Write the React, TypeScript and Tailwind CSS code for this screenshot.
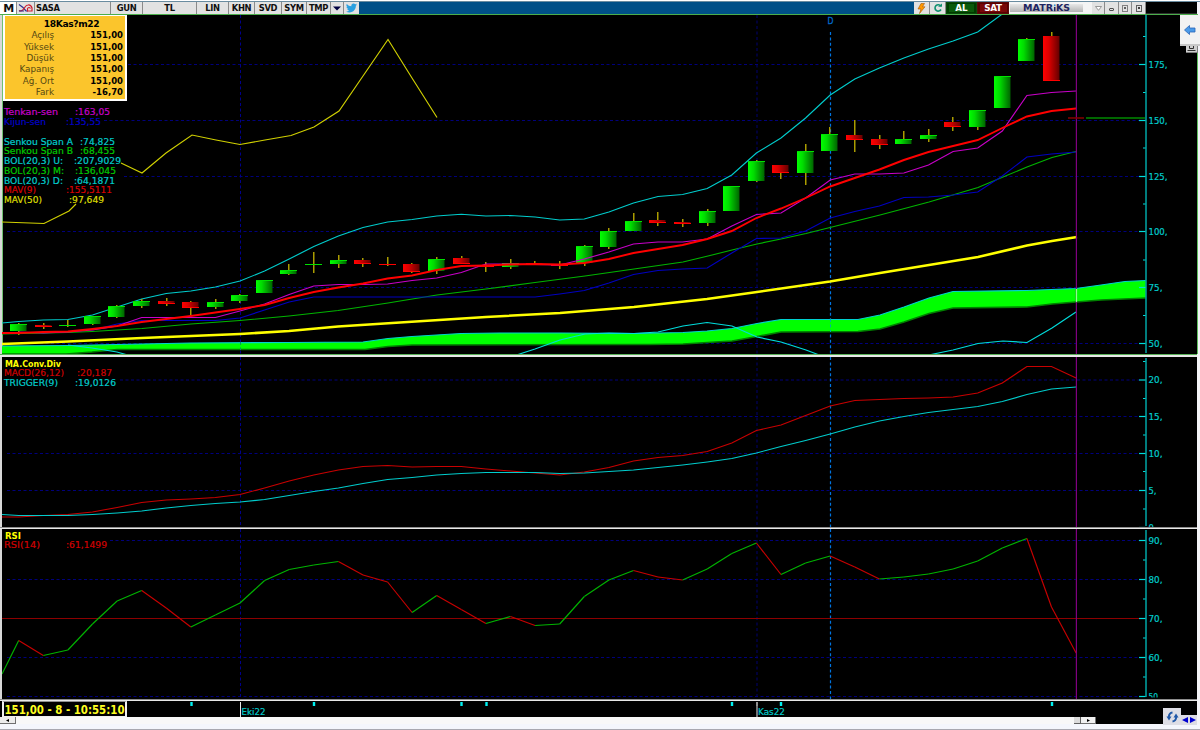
import React, { FC, ReactNode } from "react";

type Pt = [number, number];

const CYAN = "#00cccc";
const STEP = 24.59;
const barX = (i: number) => 18.7 + STEP * i;

// one y per bar, starting with bar `from`
const series = (from: number, ys: number[]): Pt[] =>
  ys.map((y, i) => [barX(from + i), y]);

const toPoints = (pts: Pt[]) =>
  pts.map(([x, y]) => `${x.toFixed(1)},${y}`).join(" ");

// high, top, bottom, low, up
const candles: [number, number, number, number, boolean][] = [
  [323, 324, 331, 335, true], [323, 325, 327, 329, false], [320, 325, 326, 327, true],
  [316, 316, 324, 325, true], [305, 306, 317, 318, true], [299, 301, 306, 308, true],
  [298, 301, 304, 306, false], [301, 302, 308, 315, false], [299, 302, 307, 309, true],
  [294, 295, 301, 303, true], [280, 280, 293, 293, true], [264, 270, 274, 275, true],
  [252, 264, 265, 273, true], [255, 260, 264, 268, true], [258, 260, 264, 267, false],
  [257, 264, 265, 266, false], [263, 264, 272, 273, false], [257, 259, 271, 274, true],
  [256, 258, 264, 264, false], [262, 265, 267, 272, false], [259, 263, 267, 269, true],
  [261, 263, 265, 265, false], [261, 264, 266, 269, false], [245, 246, 263, 266, true],
  [228, 231, 247, 249, true], [213, 221, 231, 231, true], [212, 220, 223, 226, false],
  [219, 222, 224, 227, false], [209, 211, 223, 226, true], [186, 186, 211, 211, true],
  [160, 161, 181, 182, true], [165, 165, 173, 179, false], [144, 151, 173, 185, true],
  [127, 134, 151, 151, true], [120, 135, 140, 152, false], [135, 139, 145, 149, false],
  [131, 139, 144, 144, true], [129, 135, 139, 142, true], [117, 122, 127, 131, false],
  [110, 110, 127, 130, true], [76, 76, 108, 108, true], [38, 39, 61, 61, true],
  [32, 36, 81, 81, false],
];

const bolUp: Pt[] = [[2, 323], ...series(0, [
  321.5, 320, 319.5, 315, 307, 299, 293.5, 291, 287, 281, 271, 259, 246.5, 236, 227.5, 222,
  219.5, 216, 214.3, 216, 215.5, 217, 220, 219, 212, 203, 196.5, 194.5, 188.5, 175, 153, 138,
  118, 95, 79, 68, 58, 49, 41, 32, 14,
])];

const tenkan = series(0, [
  332, 333, 332, 330, 326, 317.5, 317.5, 317.5, 317.5, 311, 304, 294.5, 286, 284.5, 284.5, 284,
  280.5, 278, 272.5, 264, 264, 264.5, 265, 259, 252, 244, 242, 242, 239, 226, 214.5, 213,
  198, 180, 174, 174, 173, 165, 151.5, 148, 131, 95.5, 92.5, 91,
]);

const kijun = series(3, [
  330, 324, 320.5, 320.5, 320.5, 320.5, 318, 310, 302, 297, 297, 297, 297, 297, 297, 297, 297,
  297, 297, 294, 290.5, 283, 274.5, 270.5, 269, 268, 253, 238.5, 238, 231, 218, 211.5, 206,
  197.5, 197, 195, 192, 176, 157, 154, 152,
]);

const mav9: Pt[] = [[2, 333], ...series(0, [
  333, 332, 331.5, 329, 326, 322, 319, 316, 312.5, 309, 305, 298, 292, 287.5, 283.5, 278.5,
  275.5, 270, 266, 265.5, 264.5, 264, 264.5, 263, 259, 253, 249, 245, 239, 231, 218, 208.5,
  198, 186.5, 178, 169.5, 160, 152, 146, 140, 128, 116.5, 111, 108.5,
])];

const bolMid: Pt[] = [
  [2, 334], [68, 332.5], [92, 331.5], [142, 328.5], [191, 324], [240, 320.5], [289, 316],
  [338, 310.5], [388, 303], [400, 301], [437, 295], [486, 289], [535, 282.5], [585, 276],
  [634, 269], [683, 262], [708, 256], [732, 250], [757, 244], [781, 239], [806, 233.5],
  [830, 227.5], [880, 215], [929, 202], [978, 187.5], [1003, 177], [1027, 167],
  [1052, 157.5], [1076, 151.5],
];

const mav50: Pt[] = [
  [2, 344], [68, 341.5], [142, 338], [191, 336], [240, 334], [289, 331], [338, 326.5],
  [400, 322.5], [486, 317], [560, 313], [634, 307], [707, 299], [757, 292], [830, 281.5],
  [880, 273], [929, 265], [978, 257], [1027, 245.5], [1052, 241], [1077, 237],
];

const spanA: Pt[] = [
  [2, 346], [68, 345.5], [92, 345], [142, 344], [191, 343], [289, 342.5], [363, 342],
  [388, 338.5], [412, 336.5], [461, 333.5], [500, 333], [560, 333], [634, 333.5], [683, 332.5],
  [707, 331], [732, 328.5], [757, 323.5], [781, 319.5], [858, 319.5], [880, 315], [904, 307],
  [929, 298], [953, 291.5], [1027, 290.5], [1076, 288.5], [1101, 285], [1125, 281.5], [1146, 280.5],
];

const spanB: Pt[] = [
  [2, 354], [66, 354], [92, 352], [117, 349.5], [365, 349.5], [388, 346.5], [412, 345],
  [650, 344.5], [683, 344], [732, 341], [757, 336.5], [781, 332], [858, 331.5], [880, 329],
  [904, 322], [929, 313.5], [953, 308], [1027, 307], [1052, 304], [1076, 302], [1101, 300],
  [1146, 298],
];

const bolDown: Pt[][] = [
  [[68, 345], [92, 348], [117, 352], [126, 354.5]],
  [
    [518, 354.5], [535, 349], [560, 340], [585, 334], [609, 333], [634, 333.5], [658, 332],
    [683, 326], [707, 322.5], [732, 326], [757, 337], [781, 342], [806, 350], [818, 354.5],
  ],
  [[931, 354.5], [953, 350], [978, 343.5], [1003, 341], [1027, 342.5], [1052, 328], [1076, 312]],
];

const chikou: Pt[][] = [
  [[2, 222], [44, 223.5], [69, 211], [76, 204]],
  [
    [121, 163], [142, 173], [166, 153], [192, 135], [216, 140], [240, 144.5], [265, 140],
    [291, 135.5], [314, 127], [339, 111], [363, 76], [388, 39.5], [412, 78], [437, 117.5],
  ],
];

const macd: Pt[] = [[2, 517], ...series(0, [
  517, 515.5, 514.5, 512, 507.5, 502.5, 500, 499, 497.5, 494.5, 488, 481, 475, 470, 466.5,
  465.5, 467, 466.5, 466.5, 469, 471, 473, 475, 472, 467.5, 461, 457.5, 455.5, 451.5, 443,
  430.5, 425, 415.5, 406, 400.5, 399.5, 398.5, 398, 397, 393, 383, 366.5, 366.5, 378,
])];

const trigger: Pt[] = [[2, 514.5], ...series(0, [
  515.5, 515.5, 515.5, 514.5, 513, 511, 508, 505.5, 503.5, 502, 499.5, 495.5, 491.5, 488,
  483.5, 479.5, 477.5, 475, 473.5, 472.5, 472.5, 472.5, 473.5, 473, 471.5, 470, 467.5, 465,
  462, 458.5, 453, 446.5, 440.5, 434, 427, 421, 416.5, 412.5, 409.5, 406.5, 401.5, 394.5,
  389, 387,
])];

const rsi: Pt[] = [[2, 674], ...series(0, [
  640.5, 655.5, 650, 624, 601, 590.5, 608, 627, 615, 603, 580.5, 569.5, 565, 561.5, 575, 582,
  612.5, 595.5, 609.5, 623.5, 616.5, 625.5, 624, 596.5, 580, 570.5, 577, 580, 569, 553.5, 543,
  574.5, 563, 556, 567, 579, 577, 574, 569, 561, 548, 538.5, 607, 653,
])];

const Line: FC<{ pts: Pt[]; color: string; width?: number }> = ({ pts, color, width = 1.15 }) => (
  <polyline points={toPoints(pts)} fill="none" stroke={color} strokeWidth={width} />
);

const Label: FC<{
  x: number; y: number; w: number; fill: string; bold?: boolean; size?: number; children: ReactNode;
}> = ({ x, y, w, fill, bold, size = 8.4, children }) => (
  <text
    x={x} y={y} fill={fill} fontSize={size} fontWeight={bold ? 700 : 400}
    textLength={w} lengthAdjust="spacingAndGlyphs"
  >
    {children}
  </text>
);

// name, name width, value, value start, value width, colour, baseline
const Legend: FC<{ rows: [string, number, string, number, number, string, number][] }> = ({ rows }) => (
  <>
    {rows.map(([name, w, value, vx, vw, color, y]) => (
      <g key={name} stroke={color} strokeWidth={0.2}>
        <Label x={4} y={y} w={w} fill={color}>{name}</Label>
        <Label x={vx} y={y} w={vw} fill={color}>{value}</Label>
      </g>
    ))}
  </>
);

const HGrid: FC<{ ys: number[]; from?: number }> = ({ ys, from = 7 }) => (
  <>
    {ys.map((y) => (
      <line key={y} x1={from} x2={1139} y1={y} y2={y} stroke="#00007c" strokeDasharray="3 2.5" />
    ))}
  </>
);

const VGrid: FC<{ top: number; bottom: number; markerTop?: number }> = ({ top, bottom, markerTop }) => (
  <>
    <line x1={240.5} x2={240.5} y1={top} y2={bottom} stroke="#00008c" strokeDasharray="3 2.5" />
    <line x1={757} x2={757} y1={top} y2={bottom} stroke="#000070" strokeDasharray="3 2.5" />
    <line
      x1={830.5} x2={830.5} y1={markerTop ?? top} y2={bottom}
      stroke="#0074e0" strokeWidth={1.2} strokeDasharray="3 2.4"
    />
  </>
);

const Axis: FC<{
  top: number; bottom: number; major: [number, string, number][]; minor: number[];
}> = ({ top, bottom, major, minor }) => (
  <>
    <rect x={1145.2} y={top} width={1.6} height={bottom - top} fill="#009c9c" />
    {major.map(([y, text, w]) => (
      <g key={text}>
        <line x1={1139} x2={1145.5} y1={y} y2={y} stroke="#00dcdc" strokeWidth={1.2} />
        <g stroke={CYAN} strokeWidth={0.2}>
          <Label x={1148.5} y={y + 3.2} w={w} fill={CYAN}>{text}</Label>
        </g>
      </g>
    ))}
    {minor.map((y) => (
      <line key={y} x1={1143} x2={1145.5} y1={y} y2={y} stroke="#00dcdc" />
    ))}
  </>
);

const Cursor: FC<{ top: number; bottom: number }> = ({ top, bottom }) => (
  <line x1={1076.4} x2={1076.4} y1={top} y2={bottom} stroke="#800080" strokeWidth={1.2} />
);

const PricePanel = () => (
  <svg className="block h-[339px] w-[1195px]" viewBox="2 15 1195 339">
    <defs>
      <linearGradient id="up">
        <stop offset="0" stopColor="#00ff00" />
        <stop offset="0.35" stopColor="#00dc00" />
        <stop offset="1" stopColor="#006400" />
      </linearGradient>
      <linearGradient id="down">
        <stop offset="0" stopColor="#ff0000" />
        <stop offset="0.35" stopColor="#dc0000" />
        <stop offset="1" stopColor="#640000" />
      </linearGradient>
    </defs>
    <HGrid ys={[64.5]} from={128} />
    <HGrid ys={[120.5]} from={104} />
    <HGrid ys={[176.5]} from={124} />
    <HGrid ys={[231.5, 287.5, 343.5]} />
    <VGrid top={15} bottom={354} markerTop={32} />
    <g stroke="#0068c8" strokeWidth={0.3}>
      <Label x={827.5} y={24.3} w={6} fill="#0068c8" size={8}>D</Label>
    </g>

    <polygon points={toPoints([...spanA, ...[...spanB].reverse()])} fill="#00ff00" />
    <Line pts={spanB} color="#008000" width={1.6} />
    <Line pts={spanA} color="#00d0d0" />
    {bolDown.map((pts, i) => <Line key={i} pts={pts} color="#00dcdc" />)}
    <line x1={240.5} x2={240.5} y1={342} y2={350} stroke="#00a050" strokeDasharray="3 2.5" />
    <line x1={830.5} x2={830.5} y1={319} y2={332} stroke="#00b0a0" strokeDasharray="3 2.4" />

    {chikou.map((pts, i) => <Line key={i} pts={pts} color="#d0d000" />)}
    <Line pts={bolUp} color={CYAN} />
    {candles.map(([high, top, bottom, low, up], i) => {
      const x = Math.round(barX(i) - 8.7);
      const edge = up ? "#00e000" : "#ff0000";
      return (
        <g key={i}>
          <rect x={x + 8} y={high} width={1.5} height={low - high} fill="#aa9c00" />
          <rect x={x} y={top} width={16.5} height={bottom - top} fill={up ? "url(#up)" : "url(#down)"} />
          <rect x={x} y={up ? top : bottom - 1} width={17} height={1} fill={edge} />
        </g>
      );
    })}
    <Line pts={bolMid} color="#00b400" />
    <Line pts={kijun} color="#0000c0" />
    <Line pts={tenkan} color="#c800c8" />
    <Line pts={mav9} color="#ff0000" width={1.9} />
    <Line pts={mav50} color="#ffff00" width={2.6} />

    <Cursor top={15} bottom={354} />
    <line x1={1076.5} x2={1076.5} y1={289} y2={302} stroke="#90ff90" strokeWidth={1.2} />
    <line x1={1068} x2={1084} y1={118} y2={118} stroke="#800000" strokeWidth={1.6} />
    <line x1={1086} x2={1145} y1={118} y2={118} stroke="#008a00" strokeWidth={1.6} />
    <Axis
      top={15} bottom={353}
      major={[[64.5, "175,", 19], [120.5, "150,", 19], [176.5, "125,", 19], [231.5, "100,", 19], [287.5, "75,", 14], [343.5, "50,", 14]]}
      minor={[36.5, 92.5, 148, 204, 260, 315.5]}
    />
    <Legend
      rows={[
        ["Tenkan-sen", 54, ":163,05", 75, 35, "#c800c8", 115.3],
        ["Kijun-sen", 42, ":135,55", 66, 35, "#0000c8", 125.2],
        ["Senkou Span A", 69, ":74,825", 80, 35, CYAN, 144.6],
        ["Senkou Span B", 69, ":68,455", 80, 35, "#00c800", 154.4],
        ["BOL(20,3) U:", 59, ":207,9029", 74, 47, CYAN, 164],
        ["BOL(20,3) M:", 60, ":136,045", 75, 41, "#00c800", 173.8],
        ["BOL(20,3) D:", 59, ":64,1871", 74, 41, CYAN, 183.5],
        ["MAV(9)", 32, ":155,5111", 66, 46, "#d80000", 193.2],
        ["MAV(50)", 38, ":97,649", 69, 35, "#dcdc00", 203],
      ]}
    />
  </svg>
);

const MacdPanel = () => (
  <svg className="block h-[170px] w-[1195px]" viewBox="2 357 1195 170">
    <HGrid ys={[380]} from={120} />
    <HGrid ys={[416.5, 453.5, 490.5]} />
    <VGrid top={357} bottom={527} />
    <Line pts={macd} color="#c80000" />
    <Line pts={trigger} color={CYAN} />
    <Cursor top={357} bottom={527} />
    <Axis
      top={358} bottom={526}
      major={[[380, "20,", 14], [416.5, "15,", 14], [453.5, "10,", 14], [490.5, "5,", 8], [527.5, "0,", 8]]}
      minor={[361.5, 398.5, 435, 471.5, 509]}
    />
    <Label x={5} y={367} w={56} fill="#ffff00" bold>MA.Conv.Div</Label>
    <Legend
      rows={[
        ["MACD(26,12)", 60, ":20,187", 77, 35, "#d00000", 376],
        ["TRIGGER(9)", 54, ":19,0126", 75, 41, CYAN, 385.7],
      ]}
    />
  </svg>
);

const RsiPanel = () => (
  <svg className="block h-[170px] w-[1195px]" viewBox="2 529 1195 170">
    <HGrid ys={[540.5]} from={110} />
    <HGrid ys={[579.5, 657.5, 696.5]} />
    <VGrid top={529} bottom={699} />
    <line x1={2} x2={1145} y1={618.5} y2={618.5} stroke="#8c0000" />
    {rsi.slice(1).map(([x, y], i) => (
      <Line key={i} pts={[rsi[i], [x, y]]} color={y < rsi[i][1] ? "#00b400" : "#c80000"} />
    ))}
    <Cursor top={529} bottom={699} />
    <Axis
      top={530} bottom={697}
      major={[[540.5, "90,", 14], [579.5, "80,", 14], [618.5, "70,", 14], [657.5, "60,", 14], [696.5, "50,", 12]]}
      minor={[560, 599, 638, 677]}
    />
    <rect x={1147} y={697.5} width={30} height={2} fill="#000" />
    <Label x={5} y={538.5} w={16} fill="#ffff00" bold>RSI</Label>
    <Legend rows={[["RSI(14)", 36, ":61,1499", 66, 41, "#d00000", 547.7]]} />
  </svg>
);

const quote = [
  ["Açılış", "151,00"],
  ["Yüksek", "151,00"],
  ["Düşük", "151,00"],
  ["Kapanış", "151,00"],
  ["Ağ. Ort", "151,00"],
  ["Fark", "-16,70"],
];

const QuoteBox = () => (
  <div className="absolute left-0 top-0 h-[86px] w-[124px] border-2 border-t-[1px] border-white bg-[#fbc52c] pt-[3px] text-black">
    <div className="pl-[13px] text-center text-[9.1px] font-bold leading-[11px] tracking-[-0.35px]">18Kas?m22</div>
    {quote.map(([name, value]) => (
      <div key={name} className="flex h-[11.35px] items-center pr-[2px]">
        <span className="w-[49px] text-right text-[8.8px] leading-none text-[#554812]">{name}</span>
        <span className="flex-1 text-right text-[8.5px] font-bold leading-none">{value}</span>
      </div>
    ))}
  </div>
);

const Cell: FC<{ className: string; children?: ReactNode }> = ({ className, children }) => (
  <div
    className={`flex h-full shrink-0 items-center justify-center border-r border-[#8a8a8a] bg-[#e2e2e2] text-[8.4px] font-bold leading-none tracking-[-0.35px] text-[#101010] ${className}`}
  >
    {children}
  </div>
);

const Header = () => (
  <div className="flex h-[12px] w-[1197px] bg-[#005088]">
    <Cell className="w-[17px] bg-white pl-[1px] text-[11px] text-[#14146e]">M</Cell>
    <Cell className="w-[18px]">
      <svg className="h-[10px] w-[15px]" viewBox="0 0 15 10" fill="none">
        <path d="M1 1.500 L5 4.500 L8 8 H10" stroke="#303090" strokeWidth="1.2" />
        <path d="M1 7.500 Q4 9 6 5.500 T10 2 Q13 1.500 14 5 V8 H9.500 V5.500 Q11 3.500 12.500 5.500" stroke="#d02030" strokeWidth="1.200" />
        <path d="M1 8 H6" stroke="#303090" strokeWidth="1" />
      </svg>
    </Cell>
    <Cell className="w-[76px] justify-start pl-[1px]">SASA</Cell>
    <Cell className="w-[32px]">GUN</Cell>
    <Cell className="w-[54px]">TL</Cell>
    <Cell className="w-[32px]">LIN</Cell>
    <Cell className="w-[26px]">KHN</Cell>
    <Cell className="w-[27px]">SVD</Cell>
    <Cell className="w-[25px]">SYM</Cell>
    <Cell className="w-[24px]">TMP</Cell>
    <Cell className="w-[13px]">
      <svg className="h-[5px] w-[8px]" viewBox="0 0 8 5"><path d="M0 0.500H8L4 4.500Z" fill="#000040" /></svg>
    </Cell>
    <Cell className="w-[15px] border-r-0">
      <svg className="h-[10px] w-[11px]" viewBox="0 0 24 20" fill="#2aa0e0">
        <path d="M24 2.400a10 10 0 0 1-2.800.8A5 5 0 0 0 23.300.5a10 10 0 0 1-3.100 1.200A4.900 4.900 0 0 0 11.800 6.200 14 14 0 0 1 1.700 1a4.900 4.900 0 0 0 1.500 6.600A5 5 0 0 1 1 7a4.900 4.900 0 0 0 4 4.900 5 5 0 0 1-2.300.1 4.900 4.900 0 0 0 4.600 3.400A10 10 0 0 1 0 17.500a14 14 0 0 0 7.500 2.200c9.100 0 14-7.500 14-14v-.6A10 10 0 0 0 24 2.400z" />
      </svg>
    </Cell>
    <div className="flex-1" />
    <Cell className="w-[16px]">
      <svg className="h-[11px] w-[9px]" viewBox="0 0 9 11">
        <path d="M4 0.500H7.500L5.500 3.800H8L2.500 10.500L4 6H1Z" fill="#ff9800" stroke="#a85800" strokeWidth="0.600" />
      </svg>
    </Cell>
    <Cell className="w-[16px]">
      <svg className="h-[10px] w-[10px]" viewBox="0 0 10 10">
        <path d="M7.800 3A3.200 3.200 0 1 0 8 6.500" fill="none" stroke="#109070" strokeWidth="1.600" />
        <path d="M5 3.800H9V0.500Z" fill="#109070" />
      </svg>
    </Cell>
    <div className="flex w-[31px] items-center justify-center border border-[#0a4a0a] bg-[#003c00] text-[8.8px] font-bold leading-none text-white">
      <span className="w-[25px] bg-[#0a5a0a] text-center leading-[8px]">AL</span>
    </div>
    <div className="flex w-[32px] items-center justify-center border border-[#5a0a0a] bg-[#5a0000] text-[8.8px] font-bold leading-none text-white">
      <span className="w-[27px] bg-[#780808] text-center leading-[8px] tracking-[-0.4px]">SAT</span>
    </div>
    <div className="flex w-[83px] items-center bg-[#f4f4f4]">
      <div className="ml-px flex h-[8px] w-[73px] items-center justify-center bg-linear-to-b from-[#e8e8e8] to-[#b4b4b4]">
        <svg className="h-[10px] w-[48px] overflow-visible" viewBox="0 0 48 10">
          <Label x={0} y={8.2} w={30} fill="#1e2460" bold size={9}>MATR</Label>
          <rect x={31} y={1.5} width={1.5} height={1.6} fill="#2a90d0" />
          <rect x={31} y={4} width={1.5} height={4.2} fill="#1e2460" />
          <Label x={33} y={8.2} w={14} fill="#1e2460" bold size={9}>KS</Label>
        </svg>
      </div>
    </div>
    <Cell className="w-[13px]">
      <svg className="h-[5px] w-[7px]" viewBox="0 0 7 5"><path d="M0.500 0.500H6.500L3.500 4.300Z" fill="#fff" stroke="#808080" strokeWidth="0.800" /></svg>
    </Cell>
    <Cell className="w-[14px]"><i className="mt-[3px] h-[3px] w-[5px] rounded-[1px] border border-[#505050]" /></Cell>
    <Cell className="w-[13px]">
      <i className="flex h-[7px] w-[6px] items-center justify-center border border-[#808080]"><b className="size-[2px] bg-[#606060]" /></i>
    </Cell>
    <Cell className="w-[14px]">
      <i className="flex h-[7px] w-[6px] items-center justify-center border border-[#606060]"><b className="size-[2px] bg-[#404040]" /></i>
    </Cell>
    <div className="w-[51px] border-b border-[#303030] bg-black" />
  </div>
);

const ticks = [191.5, 314, 461.5, 486.5, 732, 781, 1052];

const TimeAxis = () => (
  <div className="relative flex h-[16px] w-[1197px] bg-black">
    <div className="ml-[2px] flex h-[16px] w-[125px] items-center border-2 border-y border-[#f0f0f0] border-t-[#909090] bg-black">
      <svg className="h-[14px] w-[121px] overflow-visible" viewBox="0 0 121 14">
        <Label x={0.5} y={11.8} w={120} fill="#ffff20" bold size={11.6}>151,00 - 8 - 10:55:10</Label>
      </svg>
    </div>
    <svg className="h-[16px] w-[1070px]" viewBox="127 701 1070 16">
      {ticks.map((x) => <rect key={x} x={x - 1.2} y={702} width={2.4} height={4} fill="#00f0f0" />)}
      <rect x={240} y={702} width={1} height={15} fill="#e8e8e8" />
      <rect x={756} y={702} width={2} height={4} fill="#909090" />
      <rect x={756.5} y={706} width={1} height={11} fill="#e8e8e8" />
      <g stroke={CYAN} strokeWidth={0.2}>
        <Label x={241.5} y={714.6} w={24} fill={CYAN} size={8.6}>Eki22</Label>
        <Label x={758} y={714.6} w={27} fill={CYAN} size={8.6}>Kas22</Label>
      </g>
    </svg>
  </div>
);

const Scrollbar = () => (
  <div className="flex h-[7px] w-[1197px] bg-black">
    <div className="flex w-[16px] items-center justify-center border-r border-b border-[#707070] bg-[#ececec]">
      <svg className="h-[3px] w-[3px]" viewBox="0 0 3 3"><path d="M3 0V3L0 1.500Z" /></svg>
    </div>
    <div className="w-[1058px] bg-[#f8f8f8]" />
    <div className="w-[7px] border-r border-b border-[#606060] bg-[#dcdcdc]" />
    <div className="flex w-[15px] items-center justify-center border-r border-b border-[#707070] bg-[#f0f0f0]">
      <svg className="h-[3px] w-[3px]" viewBox="0 0 3 3"><path d="M0 0V3L3 1.500Z" /></svg>
    </div>
  </div>
);

const Divider: FC<{ className: string }> = ({ className }) => (
  <div className={`w-[1197px] border-t bg-[#e8e8e8] ${className}`} />
);

export default function App() {
  return (
    <div
      className="relative flex h-[730px] w-[1200px] flex-col overflow-hidden bg-[#f4f4f8]"
      style={{ fontFamily: '"DejaVu Sans", Verdana, sans-serif' }}
    >
      <div className="h-[2px] border-b border-[#6a8ca0] bg-white" />
      <Header />
      <div className="h-px w-[1198px] bg-[#4caf4c]" />

      <div className="relative h-[339px] w-[1198px] border-r border-[#60c060] bg-[#d8d8d8] pl-[2px]">
        <div className="relative h-full border-l border-[#70c070] bg-black">
          <div className="-ml-px"><PricePanel /></div>
          <QuoteBox />
        </div>
      </div>
      <Divider className="h-[3px] border-[#58b058]" />
      <div className="w-[1197px] bg-[#d8d8d8] pl-[2px]"><div className="bg-black"><MacdPanel /></div></div>
      <Divider className="h-[2px] border-[#8c8c8c]" />
      <div className="w-[1197px] bg-[#d8d8d8] pl-[2px]"><div className="bg-black"><RsiPanel /></div></div>
      <Divider className="h-[2px] border-[#8c8c8c]" />
      <TimeAxis />
      <Scrollbar />
      <div className="h-[6px] border-b border-[#a8a8b0] bg-[#f4f6fc]" />

      {/* side tab hanging over the price scale */}
      <div className="absolute right-0 top-[15px] flex h-[31px] w-[20px] items-center justify-center border-b-2 border-[#c8c8c8] bg-[#f2f2f2]">
        <svg className="h-[10px] w-[12px]" viewBox="0 0 12 10">
          <path d="M0.500 5L5.500 0.500V3H11V7H5.500V9.500Z" fill="#4a9ae8" stroke="#2a66b8" strokeWidth="0.800" />
        </svg>
      </div>
      <div className="absolute right-[2px] top-[46px] flex h-[7px] w-[12px] justify-center border-r border-b border-[#808080] bg-[#d0d0d0]">
        <svg className="h-[6px] w-[9px]" viewBox="0 0 9 6">
          <path d="M2.500 0V2.500H6.500V0M0.500 4.500H8.500" fill="none" stroke="#303030" />
        </svg>
      </div>

      {/* refresh and page arrows */}
      <div className="absolute left-[1163px] top-[708px] flex h-[17px] w-[18px] items-center justify-center bg-[#dedee6]">
        <svg className="h-[12px] w-[13px]" viewBox="0 0 13 12">
          <path d="M6.500 1.500Q3 2 2.800 6M6.500 10.500Q10 10 10.200 6" fill="none" stroke="#2058a8" strokeWidth="2" />
          <path d="M0.500 5.500H5.500L3 9.500ZM12.500 6.500H7.500L10 2.500Z" fill="#2058a8" />
        </svg>
      </div>
      <div className="absolute left-[1181px] top-[715px] flex h-[10px] w-[16px] items-center justify-between bg-[#dcdce4] px-px">
        <svg className="h-[6px] w-[6px]" viewBox="0 0 6 6"><path d="M6 0V6L0 3Z" fill="#0000d0" /></svg>
        <svg className="h-[6px] w-[6px]" viewBox="0 0 6 6"><path d="M0 0V6L6 3Z" fill="#0000d0" /></svg>
      </div>
    </div>
  );
}
